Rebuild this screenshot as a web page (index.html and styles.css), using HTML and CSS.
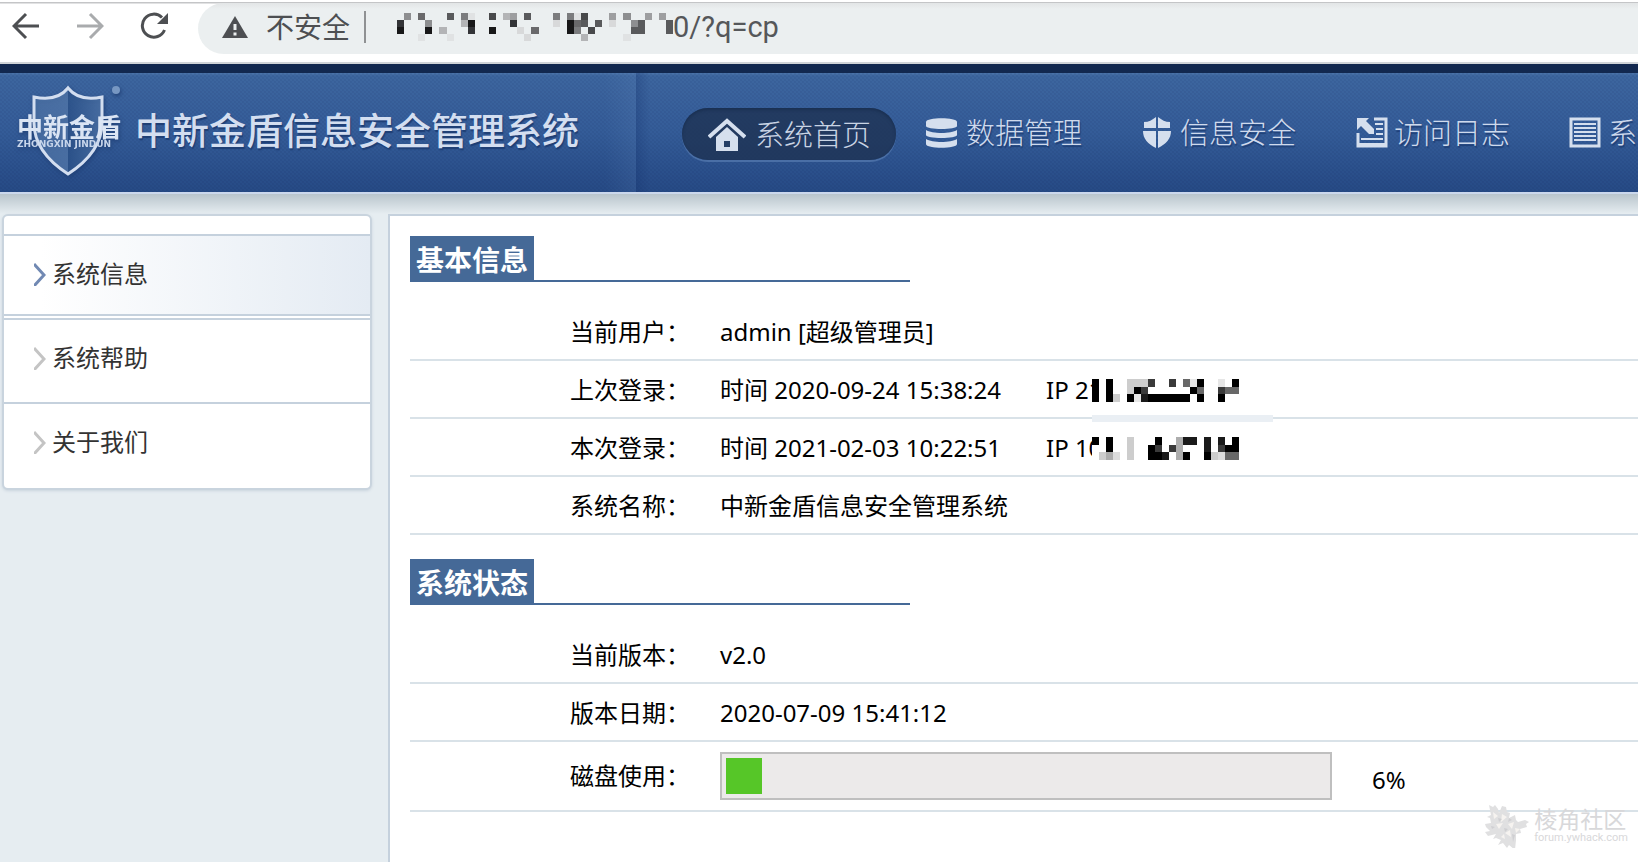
FILE: index.html
```
<!DOCTYPE html>
<html lang="zh-CN">
<head>
    <meta charset="UTF-8">
    <meta name="viewport" content="width=device-width, initial-scale=1.0">
    <title>中新金盾信息安全管理系统</title>
    <link rel="stylesheet" href="styles.css">
</head>
<body>

<!-- 浏览器地址栏 -->
<div class="browser">
    <button class="tool-btn" type="button">
        <svg width="28" height="28" viewBox="0 0 28 28" fill="none" stroke="#4d4f52" stroke-width="3"><path d="M27 14H3M14 2 2 14l12 12"/></svg>
    </button>
    <button class="tool-btn" type="button" disabled>
        <svg width="28" height="28" viewBox="0 0 28 28" fill="none" stroke="#a9abad" stroke-width="3"><path d="M1 14h24M14 2l12 12-12 12"/></svg>
    </button>
    <button class="tool-btn" type="button">
        <svg width="28" height="28" viewBox="0 0 28 28"><path d="M24.500 18A11.500 11.500 0 1 1 22 5.500" fill="none" stroke="#4d4f52" stroke-width="3"/><path d="M28 1v11H17z" fill="#4d4f52"/></svg>
    </button>
    <div class="address">
        <svg class="warn" width="26" height="24" viewBox="0 0 26 24"><path d="M13 1 26 23H0z" fill="#4d4f52"/><path d="M13 9v6M13 17.500v3" stroke="#ecefef" stroke-width="3"/></svg>
        <label class="unsafe" for="url">不安全</label>
        <svg class="url-mosaic" width="276" height="28" viewBox="0 0 39 4" preserveAspectRatio="none" shape-rendering="crispEdges">
            <path fill="#181819" d="M0 2h1v1H0zM4 2h1v1H4zM10 1h1v1h-1zM13 2h1v1h-1zM24 1h1v2h-1z"/>
            <path fill="#333437" d="M0 1h1v1H0zM16 1h1v1h-1zM10 2h1v1h-1z"/>
            <path fill="#48494b" d="M13 0h1v1h-1zM26 0h1v1h-1zM27 2h1v1h-1z"/>
            <path fill="#595a5c" d="M7 0h1v1H7zM18 0h1v1h-1zM28 1h1v1h-1zM34 1h1v2h-1zM33 2h1v1h-1zM38 1h1v2h-1zM26 1h1v1h-1z"/>
            <path fill="#69696b" d="M3 0h1v1H3zM19 2h1v1h-1zM25 1h1v1h-1z"/>
            <path fill="#7b7c7e" d="M22 0h1v1h-1zM24 0h1v1h-1zM25 2h1v1h-1zM9 0h1v1H9z"/>
            <path fill="#8d8e90" d="M1 0h1v1H1zM4 1h1v1H4zM32 0h1v1h-1zM33 1h1v1h-1z"/>
            <path fill="#9d9ea0" d="M16 0h1v1h-1zM30 0h1v1h-1zM35 0h1v1h-1zM37 0h1v1h-1z"/>
            <path fill="#b3b4b6" d="M15 0h1v1h-1zM9 1h1v1H9zM6 2h1v1H6zM26 3h1v1h-1z"/>
            <path fill="#d8d9da" d="M17 2h1v1h-1zM22 1h1v1h-1zM18 3h1v1h-1zM30 1h1v1h-1z"/>
            <path fill="#e0e2e3" d="M3 3h1v1H3zM7 3h1v1H7zM10 0h1v1h-1zM25 0h1v1h-1zM32 3h1v1h-1z"/>
        </svg>
        <input class="url" id="url" type="text" value="0/?q=cp">
    </div>
</div>

<!-- 顶部导航 -->
<header class="header">
    <div class="brand">
        <svg class="logo" width="108" height="100" viewBox="0 0 108 100">
            <defs>
                <linearGradient id="shine" x1="0" x2="1">
                    <stop offset="0" stop-color="#5b82b4"/>
                    <stop offset=".5" stop-color="#6288b9"/>
                    <stop offset=".5" stop-color="#30588f"/>
                    <stop offset="1" stop-color="#5b82b4"/>
                </linearGradient>
            </defs>
            <path d="M52 5C44 15 32 17 18 14v26c0 22 14 38 34 51 20-13 34-29 34-51V14C72 17 60 15 52 5z" fill="url(#shine)" fill-opacity=".6" stroke="#d3def0" stroke-width="3"/>
            <circle cx="100" cy="7" r="4" fill="#7797c2"/>
            <text class="logo-name" x="1" y="54">中新金盾</text>
            <text class="logo-pinyin" x="1" y="64">ZHONGXIN JINDUN</text>
        </svg>
        <h1 class="site-title">中新金盾信息安全管理系统</h1>
    </div>
    <nav class="nav">
        <a class="nav-item active" href="#">
            <svg class="nav-icon" width="38" height="34" viewBox="0 0 38 34"><path d="M1 19 19 3l18 16" fill="none" stroke="#d5dfee" stroke-width="4"/><path d="M19 9 30 19v14H8V19z" fill="#d5dfee"/><path d="M16 23h6v6h-6z" fill="#253f66"/></svg>
            系统首页
        </a>
        <a class="nav-item" href="#">
            <svg class="nav-icon" width="38" height="34" viewBox="0 0 38 34" fill="#d5dfee"><path d="M2 6c0-5 31-5 31 0v4c0 4-31 4-31 0z"/><path d="M2 14c6 4 25 4 31 0v5c0 4-31 4-31 0z"/><path d="M2 23c6 4 25 4 31 0v5c0 5-31 5-31 0z"/></svg>
            数据管理
        </a>
        <a class="nav-item" href="#">
            <svg class="nav-icon" width="38" height="34" viewBox="0 0 38 34" fill="#d5dfee"><path d="M18 1v11H6V6c5 0 8-2 12-5zM20 1v11h12V6c-5 0-8-2-12-5zM5 15h13v17C10 28 5 23 5 15zM33 15H20v17c8-4 13-9 13-17z"/></svg>
            信息安全
        </a>
        <a class="nav-item" href="#">
            <svg class="nav-icon" width="38" height="34" viewBox="0 0 38 34"><path d="M22 3h12v27H6V17" fill="none" stroke="#d5dfee" stroke-width="3"/><path d="M5 2h12l-3 3 8 8v5h-5l-8-8-4 4zM5 27h30v4H5z" fill="#d5dfee"/><path d="M23 8h8M24 13h7M24 18h7M9 23h22" stroke="#d5dfee" stroke-width="2"/></svg>
            访问日志
        </a>
        <a class="nav-item" href="#">
            <svg class="nav-icon" width="38" height="34" viewBox="0 0 38 34"><path d="M5 3h28v27H5z" fill="none" stroke="#d5dfee" stroke-width="3"/><path d="M8 8h22M8 12h22M8 16h22M8 20h22M8 24h22" stroke="#d5dfee" stroke-width="2"/></svg>
            系统
        </a>
    </nav>
</header>

<!-- 主体 -->
<div class="container">
    <!-- 左侧菜单 -->
    <aside class="sidebar">
        <ul class="menu">
            <li class="menu-item current"><a href="#"><svg width="12" height="24" viewBox="0 0 12 24"><path d="M0 2l10 11L0 24"/></svg>系统信息</a></li>
            <li class="menu-item"><a href="#"><svg width="12" height="24" viewBox="0 0 12 24"><path d="M0 2l10 11L0 24"/></svg>系统帮助</a></li>
            <li class="menu-item"><a href="#"><svg width="12" height="24" viewBox="0 0 12 24"><path d="M0 2l10 11L0 24"/></svg>关于我们</a></li>
        </ul>
    </aside>

    <!-- 右侧内容 -->
    <main class="content">
        <h2 class="section-title"><span>基本信息</span></h2>
        <table class="info">
            <tr>
                <th>当前用户：</th>
                <td>admin [超级管理员]</td>
            </tr>
            <tr>
                <th>上次登录：</th>
                <td>
                    <div class="login">
                        <span class="login-time">时间 2020-09-24 15:38:24</span>
                        <span>IP 21</span>
                        <svg class="ip-mosaic" width="147" height="23" viewBox="0 0 21 3" preserveAspectRatio="none" shape-rendering="crispEdges">
                            <path fill="#000" d="M0 0h1v3H0zM2 0h1v3H2zM15 0h1v1h-1zM20 0h1v1h-1zM6 1h1v1H6zM14 1h1v1h-1zM5 2h1v1H5zM8 2h6v1H8zM15 2h1v1h-1zM18 2h1v1h-1z"/>
                            <path fill="#3a3a3a" d="M8 0h1v1H8zM11 0h1v1h-1zM7 1h1v1H7zM18 1h1v1h-1z"/>
                            <path fill="#1a1a1a" d="M7 2h1v1H7z"/>
                            <path fill="#686868" d="M13 0h1v1h-1zM15 1h1v1h-1zM19 1h2v1h-2z"/>
                            <path fill="#cdcdcd" d="M5 0h3v1H5zM5 1h1v1H5zM3 2h1v1H3z"/>
                            <path fill="#e6e6e6" d="M14 0h1v1h-1zM18 0h1v1h-1zM6 2h1v1H6z"/>
                        </svg>
                        <i class="strip"></i>
                    </div>
                </td>
            </tr>
            <tr>
                <th>本次登录：</th>
                <td>
                    <div class="login">
                        <span class="login-time">时间 2021-02-03 10:22:51</span>
                        <span>IP 10</span>
                        <svg class="ip-mosaic" width="147" height="23" viewBox="0 0 21 3" preserveAspectRatio="none" shape-rendering="crispEdges">
                            <path fill="#000" d="M0 0h1v1H0zM2 0h1v2H2zM9 0h1v1H9zM20 0h1v2h-1zM8 1h1v2H8zM9 2h1v1H9zM13 2h1v1h-1zM16 2h1v1h-1zM19 1h1v1h-1z"/>
                            <path fill="#1a1a1a" d="M13 0h2v1h-2zM16 0h1v2h-1zM18 0h1v1h-1zM10 2h1v1h-1z"/>
                            <path fill="#3a3a3a" d="M9 1h1v1H9zM11 1h1v1h-1zM18 1h1v1h-1z"/>
                            <path fill="#686868" d="M19 2h2v1h-2z"/>
                            <path fill="#adadad" d="M12 0h1v3h-1zM2 2h1v1H2z"/>
                            <path fill="#cdcdcd" d="M5 0h1v3H5zM1 2h1v1H1zM17 2h1v1h-1z"/>
                            <path fill="#dcdcdc" d="M3 2h1v1H3zM18 2h1v1h-1z"/>
                        </svg>
                    </div>
                </td>
            </tr>
            <tr>
                <th>系统名称：</th>
                <td>中新金盾信息安全管理系统</td>
            </tr>
        </table>

        <h2 class="section-title"><span>系统状态</span></h2>
        <table class="info">
            <tr>
                <th>当前版本：</th>
                <td>v2.0</td>
            </tr>
            <tr>
                <th>版本日期：</th>
                <td>2020-07-09 15:41:12</td>
            </tr>
            <tr class="disk-row">
                <th><label for="disk">磁盘使用：</label></th>
                <td>
                    <div class="disk">
                        <progress id="disk" value="6" max="100"></progress>
                        <span class="percent">6%</span>
                    </div>
                </td>
            </tr>
        </table>
    </main>
</div>

<!-- 右下角水印 -->
<div class="watermark">
    <svg width="46" height="44" viewBox="0 0 46 44">
        <path fill="#e0e0e1" d="M5 1l4 2 2-2 3 4 1 4 3-7 4 1 1 5 3 1-1 5 6-3 1 5 2 2 7-2 4 2-3 2 1 3-7 2 1 4-5 1 0 6-1 10-6-5-2 3-4-5-5 2 3-5-5-2-3 1 3-5-8 2-3-4 5-1-4-4-1-3 6-1-1-5-3-1 4-2z"/>
        <path fill="#f6f3f0" d="M9 8l5 4-4 3zM18 10l5 3-6 5zM12 20l7-1-4 6zM24 20l6-2-2 7zM21 29l5-3 1 7zM31 24l5 1-4 4zM17 33l3-3 1 5z"/>
        <path fill="#cfcfd2" d="M14 14l4 1-3 3zM25 14l3 2-4 2zM20 24l4 1-3 3zM28 30l3 1-2 7zM7 22l4 1-3 2z"/>
    </svg>
    <div class="watermark-text">
        <span class="watermark-name">棱角社区</span>
        <span class="watermark-url">forum.ywhack.com</span>
    </div>
</div>

</body>
</html>
```

FILE: styles.css
```
/* 页面整体布局 */
* {
    box-sizing: border-box;
}
body {
    margin: 0;
    min-height: 100vh;
    display: flex;
    flex-direction: column;
    position: relative;
    overflow-x: hidden;
    font-family: "Noto Sans", "Noto Sans CJK SC", sans-serif;
    font-size: 24px;
    line-height: 32px;
    color: #000;
    background-color: #e6edf1;
}
a {
    color: inherit;
    text-decoration: none;
}

/* 浏览器地址栏 */
.browser {
    display: flex;
    align-items: flex-start;
    height: 64px;
    padding-left: 12px;
    background: linear-gradient(#fff 2px, #c4c5c7 2px, #c4c5c7 3px, #fff 4px);
    border-bottom: 2px solid #d0d4d8;
}
.tool-btn {
    display: flex;
    margin: 12px 36px 0 0;
    padding: 0;
    border: none;
    background: none;
}
.address {
    flex: 1;
    display: flex;
    align-items: center;
    height: 51px;
    margin-top: 3px;
    margin-left: -6px;
    padding: 0 0 4px 24px;
    background: linear-gradient(#e2e5e6, #ebeff0 6px);
    border-radius: 26px 0 0 26px;
}
.unsafe {
    margin-left: 18px;
    padding-right: 14px;
    font-size: 28px;
    color: #4d4f52;
    border-right: 2px solid #8f9193;
}
.url-mosaic {
    margin-left: 31px;
}
.url {
    flex: 1;
    padding: 0;
    border: none;
    background: none;
    font-family: Roboto, sans-serif;
    font-size: 29px;
    color: #55575a;
}

/* 顶部导航 */
.header {
    display: flex;
    height: 130px;
    border-top: 9px solid #12284f;
    border-bottom: 2px solid #cbd8ec;
    background: repeating-conic-gradient(rgba(0, 10, 60, .06) 0 25%, transparent 0 50%) 0 0 / 4px 4px,
        linear-gradient(#4b74aa, #3d669f 3px, #345c98 50%, #264a85);
}
.brand {
    display: flex;
    align-items: center;
    width: 636px;
    padding-left: 16px;
    background: linear-gradient(90deg, transparent 95%, rgba(120, 160, 210, .12));
}
.logo {
    flex-shrink: 0;
    filter: drop-shadow(1px 2px 2px #1f3f75);
}
.logo-name {
    font-size: 26px;
    font-weight: bold;
    fill: #dbe5f4;
}
.logo-pinyin {
    font-family: "DejaVu Sans", sans-serif;
    font-size: 9px;
    font-weight: bold;
    fill: #c8d6eb;
}
.site-title {
    margin: 0 0 0 11px;
    padding-bottom: 4px;
    font-size: 37px;
    line-height: 48px;
    font-weight: 500;
    white-space: nowrap;
    color: #d3def0;
    text-shadow: 1px 2px 1px #1f3f75;
}
.nav {
    flex: 1;
    display: flex;
    align-items: center;
    min-width: 0;
    overflow: hidden;
    padding-left: 46px;
    background: linear-gradient(90deg, rgba(20, 50, 110, .3), transparent 14px);
}
.nav-item {
    flex: none;
    display: flex;
    align-items: center;
    gap: 4px;
    width: 214px;
    height: 52px;
    padding-left: 28px;
    font-size: 29px;
    color: #cfdaec;
    text-shadow: 1px 2px 1px #1f3f75;
    font-weight: 300;
}
.nav-item.active {
    gap: 9px;
    padding: 2px 0 0 26px;
    margin-top: 2px;
    color: #c9d4e4;
    text-shadow: none;
    border-radius: 26px;
    background-color: rgba(30, 50, 82, .8);
    box-shadow: inset 0 2px 3px #1a3052, 0 2px 0 #4a6fa6;
}
.nav-icon {
    flex-shrink: 0;
}

/* 主体容器 */
.container {
    flex: 1;
    display: flex;
    padding: 20px 0 0 2px;
    background: linear-gradient(#b9c5cc, #e6edf1 20px);
}

/* 左侧菜单 */
.sidebar {
    width: 370px;
    margin-right: 16px;
}
.menu {
    margin: 0;
    padding: 18px 0 2px;
    list-style: none;
    background-color: #fff;
    border: 2px solid #c9d4de;
    border-radius: 6px;
    box-shadow: 0 1px 3px #c9d4de;
}
.menu-item {
    border-top: 2px solid #c5d1dd;
}
.menu-item a {
    display: flex;
    align-items: center;
    gap: 6px;
    height: 82px;
    padding: 0 0 6px 30px;
    color: #333;
}
.menu-item svg {
    fill: none;
    stroke: #c4c4c4;
    stroke-width: 3;
}
.menu-item.current {
    padding-bottom: 2px;
}
.menu-item.current a {
    height: 80px;
    padding-bottom: 2px;
    border-bottom: 2px solid #c5d1dd;
    background: linear-gradient(90deg, #fff 10%, #e4ebf3);
}
.menu-item.current svg {
    stroke: #7189b3;
}

/* 右侧内容 */
.content {
    flex: 1;
    padding: 20px 0 0 20px;
    background-color: #fff;
    border-top: 2px solid #c5d1dd;
    border-left: 2px solid #c5d1dd;
}
.section-title {
    width: 500px;
    margin: 0 0 20px;
    font-size: 28px;
    line-height: 44px;
    border-bottom: 2px solid #456997;
}
.section-title span {
    display: block;
    width: fit-content;
    height: 44px;
    padding: 2px 6px 0;
    color: #fff;
    background-color: #456997;
}
.info {
    width: 100%;
    margin-bottom: 24px;
    border-collapse: collapse;
}
.info th, .info td {
    height: 58px;
    padding: 2px 0 0;
    text-align: left;
    border-bottom: 2px solid #d9e2e8;
}
.info th {
    width: 310px;
    padding-right: 30px;
    font-weight: normal;
    text-align: right;
}
.login {
    position: relative;
    display: flex;
    align-items: center;
}
.login-time {
    margin-right: 45px;
}
.ip-mosaic {
    position: absolute;
    left: 372px;
    background-color: #fff;
}
/* 分隔线上的浅色条 */
.strip {
    position: absolute;
    left: 372px;
    top: 41px;
    width: 181px;
    height: 7px;
    background-color: #eaeff4;
}

/* 磁盘使用 */
.info .disk-row th, .info .disk-row td {
    height: 70px;
    padding-top: 0;
}
.disk {
    display: flex;
    align-items: center;
    gap: 40px;
}
.percent {
    padding-top: 8px;
}
progress {
    appearance: none;
    width: 612px;
    height: 48px;
    padding: 4px;
    background-color: #eceaea;
    border: 2px solid #bfbfbf;
}
progress::-webkit-progress-bar {
    background-color: #eceaea;
}
progress::-webkit-progress-value {
    background-color: #56c628;
}

/* 水印 */
.watermark {
    position: absolute;
    right: 10px;
    bottom: 14px;
    display: flex;
    align-items: center;
    gap: 4px;
}
.watermark-text {
    display: flex;
    flex-direction: column;
    color: #d8d8da;
}
.watermark-name {
    font-size: 23px;
    line-height: 24px;
}
.watermark-url {
    font-family: Roboto, sans-serif;
    font-size: 11px;
    line-height: 14px;
}
```
